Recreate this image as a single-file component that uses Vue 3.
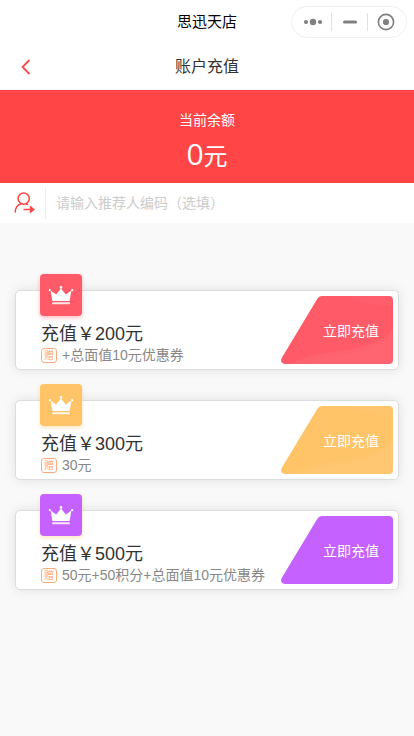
<script setup>
import { ref } from 'vue'

const code = ref('')
const plans = [
  { amount: 200, gift: '+总面值10元优惠券', theme: 'red', waves: true },
  { amount: 300, gift: '30元', theme: 'gold', waves: true },
  { amount: 500, gift: '50元+50积分+总面值10元优惠券', theme: 'purple', waves: false },
]
</script>

<template>
  <div class="page">
    <header class="appbar">
      <h1 class="app-name">思迅天店</h1>
      <div class="capsule">
        <button type="button" aria-label="更多">
          <svg width="20" height="8" viewBox="0 0 20 8">
            <circle cx="3" cy="4" r="2.1" /><circle cx="10" cy="4" r="3.2" /><circle cx="17" cy="4" r="2.1" />
          </svg>
        </button>
        <button type="button" aria-label="最小化">
          <svg width="14" height="4" viewBox="0 0 14 4"><rect width="14" height="3" y=".5" rx="1.5" /></svg>
        </button>
        <button type="button" aria-label="关闭">
          <svg width="18" height="18" viewBox="0 0 18 18">
            <circle class="ring" cx="9" cy="9" r="7.6" /><circle cx="9" cy="9" r="3.1" />
          </svg>
        </button>
      </div>
    </header>

    <nav class="navbar">
      <button type="button" class="back" aria-label="返回">
        <svg width="10" height="16" viewBox="0 0 10 16"><path d="M8.4 1 L1.6 8 L8.4 15" /></svg>
      </button>
      <h2 class="nav-title">账户充值</h2>
    </nav>

    <section class="balance">
      <p class="balance-label">当前余额</p>
      <p class="balance-value">0<span>元</span></p>
    </section>

    <div class="referrer">
      <label class="referrer-icon" for="code" aria-label="推荐人编码">
        <svg width="22" height="22" viewBox="0 0 22 22">
          <circle class="line" cx="9.7" cy="6.6" r="5.6" />
          <path class="line" d="M1.2 20.5 C1.2 15.5 3.8 12.8 7.3 11.8 M12 11.8 L14 12.6" />
          <path class="line" d="M9.5 17.5 H17" />
          <path class="head" d="M15.8 13.4 L21 17.5 L15.8 21.4 Z" />
        </svg>
      </label>
      <input id="code" v-model="code" type="text" placeholder="请输入推荐人编码（选填）" />
    </div>

    <main class="plans">
      <article v-for="p in plans" :key="p.amount" class="card" :class="p.theme">
        <div class="badge">
          <svg width="26" height="20" viewBox="0 0 26 20">
            <path d="M2.6 5.6 L8.2 9.4 L13 3.4 L17.8 9.4 L23.4 5.6 L21.6 16 H4.4 Z" />
            <circle cx="1.8" cy="5.2" r="1.1" /><circle cx="13" cy="2.4" r="1.3" /><circle cx="24.2" cy="5.2" r="1.1" />
            <rect x="4.2" y="17.2" width="17.6" height="2" rx=".5" opacity=".85" />
          </svg>
        </div>
        <div class="info">
          <h3 class="amount">充值￥{{ p.amount }}元</h3>
          <p class="gift"><span class="tag">赠</span>{{ p.gift }}</p>
        </div>
        <button type="button" class="buy">
          <svg class="shape" viewBox="0 0 112 68" preserveAspectRatio="none">
            <path class="fill" d="M40.5 0 H108 Q112 0 112 4 V64 Q112 68 108 68 H4 Q-1.5 67 .7 62 L36.5 2.5 Q38 0 40.5 0 Z" />
            <template v-if="p.waves">
              <path class="wave" d="M66 0 H108 Q112 0 112 4 V10 C98 9 84 8 66 0 Z" opacity=".03" />
              <path class="wave" d="M112 32 C96 60 43 49 10 68 H108 Q112 68 112 64 Z" opacity=".05" />
              <path class="wave" d="M112 38 C92 60 62 54 24 68 H108 Q112 68 112 64 Z" opacity=".02" />
            </template>
          </svg>
          <span class="buy-text">立即充值</span>
        </button>
      </article>
    </main>
  </div>
</template>

<style>
body {
  margin: 0;
  background: #f9f9f9;
}
</style>

<style scoped>
.page {
  font-family: "Liberation Sans", "Noto Sans CJK SC", sans-serif;
  color: #333;
}
h1, h2, h3, p {
  margin: 0;
  font-weight: 400;
}
button {
  border: 0;
  padding: 0;
  background: none;
  font: inherit;
  cursor: pointer;
}
svg {
  display: block;
}
.appbar {
  display: grid;
  grid-template-columns: 1fr auto 1fr;
  align-items: center;
  height: 44px;
  padding: 0 7px;
  background: #fff;
}
.app-name {
  grid-column: 2;
  font-size: 15px;
  line-height: 20px;
  color: #000;
}
.capsule {
  justify-self: end;
  display: flex;
  align-items: center;
  box-sizing: border-box;
  width: 116px;
  height: 32px;
  padding: 0 2px 0 3px;
  border: 1px solid #f0f0f0;
  border-radius: 16px;
}
.capsule button {
  flex: 1;
  display: flex;
  justify-content: center;
  align-items: center;
  height: 18px;
}
.capsule button + button {
  border-left: 1px solid #e2e2e2;
}
.capsule svg {
  fill: #808080;
}
.capsule .ring {
  fill: none;
  stroke: #808080;
  stroke-width: 1.6;
}
.navbar {
  display: grid;
  grid-template-columns: 1fr auto 1fr;
  align-items: center;
  box-sizing: border-box;
  height: 46px;
  padding: 0 21px;
  border-bottom: 1px solid #f3f3f3;
  background: #fff;
}
.back {
  justify-self: start;
}
.back path {
  fill: none;
  stroke: #ff4646;
  stroke-width: 1.8;
}
.nav-title {
  font-size: 16px;
  line-height: 24px;
}
.balance {
  padding: 20px 0 9px;
  background: #ff4545;
  color: #fff;
  text-align: center;
}
.balance-label {
  font-size: 14px;
  line-height: 20px;
}
.balance-value {
  padding-top: 4px;
  font-family: "Open Sans", "Noto Sans CJK SC", sans-serif;
  font-size: 30px;
  line-height: 40px;
  height: 40px;
}
.balance-value span {
  font-size: 24px;
  line-height: 1;
}
.referrer {
  display: flex;
  align-items: center;
  height: 40px;
  background: #fff;
}
.referrer-icon {
  display: flex;
  align-items: center;
  height: 32px;
  padding: 0 9px 0 14px;
  border-right: 1px solid #eee;
}
.referrer-icon .line {
  fill: none;
  stroke: #ff4545;
  stroke-width: 1.5;
}
.referrer-icon .head {
  fill: #ff4545;
}
.referrer input {
  flex: 1;
  min-width: 0;
  height: 32px;
  padding: 0 10px;
  border: 0;
  outline: 0;
  background: none;
  font: inherit;
  font-size: 14px;
  color: #333;
}
.referrer input::placeholder {
  color: #ccc;
}
.plans {
  display: grid;
  gap: 30px;
  padding: 67px 15px 30px;
}
.card {
  --main: #ff5a68;
  --shadow: rgba(255, 90, 104, 0.4);
  position: relative;
  display: flex;
  justify-content: space-between;
  box-sizing: border-box;
  min-height: 80px;
  padding: 5px 5px 5px 25px;
  border: 1px solid #ddd;
  border-radius: 5px;
  background: #fff;
  box-shadow: 0 0 12px rgba(0, 0, 0, 0.1);
}
.card.gold {
  --main: #ffc368;
  --shadow: rgba(255, 195, 104, 0.4);
}
.card.purple {
  --main: #c562ff;
  --shadow: rgba(255, 195, 104, 0.4);
}
.badge {
  position: absolute;
  top: -17px;
  left: 24px;
  display: flex;
  justify-content: center;
  align-items: center;
  width: 42px;
  height: 42px;
  border-radius: 4px;
  background: var(--main);
  box-shadow: 0 2px 4px var(--shadow);
}
.badge svg {
  fill: #fff;
}
.info {
  display: grid;
  gap: 1px;
  padding-top: 27px;
  white-space: nowrap;
}
.amount {
  font-size: 18px;
  line-height: 22px;
}
.gift {
  display: flex;
  align-items: center;
  gap: 5px;
  font-size: 14px;
  line-height: 18px;
  color: #888;
}
.tag {
  box-sizing: border-box;
  width: 16px;
  height: 15px;
  border: 1px solid #ffac7c;
  border-radius: 3px;
  font-size: 10px;
  line-height: 13px;
  text-align: center;
  color: #ffa470;
}
.buy {
  position: relative;
  flex: none;
  width: 112px;
  height: 68px;
  padding: 2px 14px 0 0;
  font-size: 14px;
  line-height: 20px;
  text-align: right;
  color: #fff;
}
.shape {
  position: absolute;
  inset: 0;
  width: 100%;
  height: 100%;
}
.fill {
  fill: var(--main);
}
.wave {
  fill: #fff;
}
.buy-text {
  position: relative;
}
</style>
